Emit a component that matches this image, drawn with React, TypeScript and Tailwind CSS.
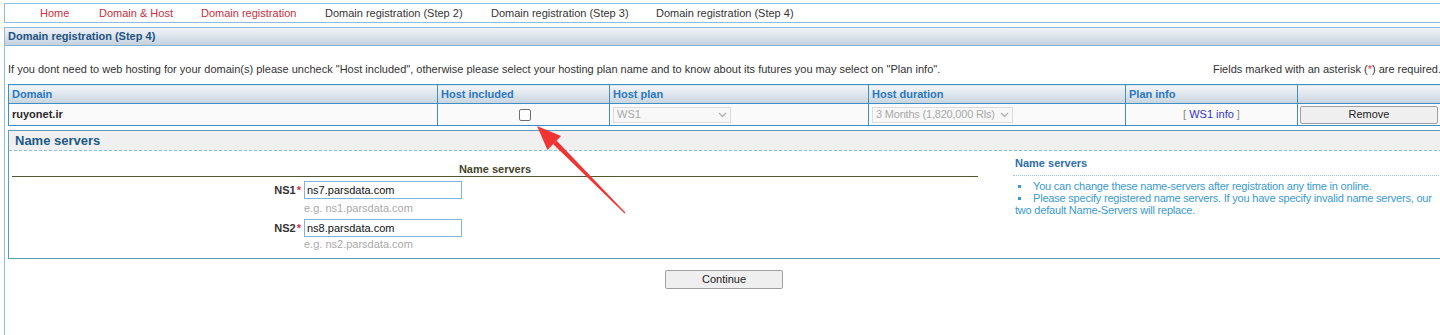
import React from "react";

export default function App() {
  const navItems: { label: string; red: boolean; w: string }[] = [
    { label: "Home", red: true, w: "w-[59px]" },
    { label: "Domain & Host", red: true, w: "w-[102px]" },
    { label: "Domain registration", red: true, w: "w-[124px]" },
    { label: "Domain registration (Step 2)", red: false, w: "w-[166px]" },
    { label: "Domain registration (Step 3)", red: false, w: "w-[165px]" },
    { label: "Domain registration (Step 4)", red: false, w: "w-[170px]" },
  ];
  const th =
    "h-[19px] px-[3px] text-left font-bold text-[#2b78c2] border border-[#3d8fc6] bg-gradient-to-b from-[#f4f7fa] to-[#c8d4df] align-middle";
  return (
    <div className="relative w-[1440px] h-[335px] overflow-hidden bg-white font-['Liberation_Sans',Arial,sans-serif] text-[11px] text-[#333]">
      <div className="w-[1460px] pl-[4px] pt-[3px]">
        {/* top nav */}
        <div className="h-[20px] border-y border-l border-[#8dbdd9] flex items-center pl-[35px]">
          {navItems.map((n) => (
            <span
              key={n.label}
              className={`${n.w} shrink-0 whitespace-nowrap ${n.red ? "text-[#c8303e]" : "text-[#353535]"}`}
            >
              {n.label}
            </span>
          ))}
        </div>

        {/* main panel */}
        <div className="mt-[4px] h-[310px] border-l border-t border-[#8dbdd9]">
          <div className="h-[18px] flex items-center pl-[3px] font-bold text-[#1e5384] bg-gradient-to-b from-[#f2f5f8] to-[#c4d1dd] border-b border-[#7fb3d4]">
            Domain registration (Step 4)
          </div>

          <div className="h-[38px] flex items-end justify-between pl-[3px] pr-[19px] pb-[7px]">
            <span>
              If you dont need to web hosting for your domain(s) please uncheck "Host included", otherwise please select your hosting plan name and to know about its futures you may select on "Plan info".
            </span>
            <span>
              Fields marked with an asterisk (<span className="text-[#e03040]">*</span>) are required.
            </span>
          </div>

          {/* domains table */}
          <table className="ml-[3px] border-collapse w-[1436px] table-fixed">
            <colgroup>
              <col className="w-[429px]" />
              <col className="w-[172px]" />
              <col className="w-[259px]" />
              <col className="w-[257px]" />
              <col className="w-[172px]" />
              <col className="w-[147px]" />
            </colgroup>
            <thead>
              <tr>
                <th className={th}>Domain</th>
                <th className={th}>Host included</th>
                <th className={th}>Host plan</th>
                <th className={th}>Host duration</th>
                <th className={th}>Plan info</th>
                <th className={th}></th>
              </tr>
            </thead>
            <tbody>
              <tr className="h-[22px] bg-[#fafafa]">
                <td className="border border-[#3d8fc6] px-[3px] font-bold text-[#2a2a2a]">ruyonet.ir</td>
                <td className="border border-[#3d8fc6] text-center">
                  <span className="inline-block align-middle w-[12px] h-[12px] border border-[#707070] rounded-[2px] bg-white ml-[2px]" />
                </td>
                <td className="border border-[#3d8fc6] px-[3px]">
                  <div className="w-[118px] h-[16px] border border-[#dcdcdc] bg-[#f8f8f8] text-[#a8a8a8] flex items-center justify-between px-[3px]">
                    <span>WS1</span>
                    <svg width="9" height="6" viewBox="0 0 9 6">
                      <path d="M1 1 L4.5 4.5 L8 1" fill="none" stroke="#b0b0b0" strokeWidth="1.3" />
                    </svg>
                  </div>
                </td>
                <td className="border border-[#3d8fc6] px-[3px]">
                  <div className="w-[141px] h-[16px] border border-[#dcdcdc] bg-[#f8f8f8] text-[#a8a8a8] flex items-center justify-between px-[3px] whitespace-nowrap tracking-[-0.2px]">
                    <span>3 Months (1,820,000 Rls)</span>
                    <svg width="9" height="6" viewBox="0 0 9 6">
                      <path d="M1 1 L4.5 4.5 L8 1" fill="none" stroke="#b0b0b0" strokeWidth="1.3" />
                    </svg>
                  </div>
                </td>
                <td className="border border-[#3d8fc6] text-center">
                  <span className="text-[#888]">[ </span>
                  <span className="text-[#3433c8]">WS1 info</span>
                  <span className="text-[#888]"> ]</span>
                </td>
                <td className="border border-[#3d8fc6] px-[2px]">
                  <div className="w-[138px] h-[18px] border border-[#a0a0a0] rounded-[2px] bg-[#efefef] flex items-center justify-center text-[#222]">
                    Remove
                  </div>
                </td>
              </tr>
            </tbody>
          </table>

          {/* name servers box */}
          <div className="ml-[3px] mt-[4px] w-[1450px] h-[129px] border border-[#5d9db8] flex flex-col">
            <div className="h-[20px] bg-[#f0f0f0] border-b border-dashed border-[#8ec2de] flex items-center pl-[6px] text-[13px] font-bold text-[#1b5a88]">
              Name servers
            </div>
            <div className="flex">
              <div className="w-[966px] ml-[3px] pt-[12px]">
                <div className="h-[14px] border-b border-[#55552f] text-center font-bold text-[#44442a] leading-[12px]">
                  Name servers
                </div>
                <div className="grid grid-cols-[289px_1fr] gap-x-[3px] mt-[4px]">
                  <div className="h-[18px] flex items-center justify-end font-bold text-[#333]">
                    NS1<span className="text-[#e03040] ml-[1px]">*</span>
                  </div>
                  <div className="h-[18px] w-[158px] border border-[#7fb6d8] flex items-center px-[2px] text-[#111]">
                    ns7.parsdata.com
                  </div>
                  <div />
                  <div className="h-[20px] flex items-center text-[#aaa] pb-[2px]">e.g. ns1.parsdata.com</div>
                  <div className="h-[18px] flex items-center justify-end font-bold text-[#333]">
                    NS2<span className="text-[#e03040] ml-[1px]">*</span>
                  </div>
                  <div className="h-[18px] w-[158px] border border-[#7fb6d8] flex items-center px-[2px] text-[#111]">
                    ns8.parsdata.com
                  </div>
                  <div />
                  <div className="h-[14px] flex items-center text-[#aaa]">e.g. ns2.parsdata.com</div>
                </div>
              </div>
              <div className="ml-[35px] w-[426px] pt-[6px]">
                <div className="pl-[2px] leading-[12px] pb-[6px] font-bold text-[#2f6ea6] border-b border-dotted border-[#9cc6dc]">
                  Name servers
                </div>
                <div className="pt-[4px] text-[#3a9ad0] leading-[12px] pl-[2px] tracking-[-0.2px]">
                  <div>
                    <span className="inline-block align-middle w-[3px] h-[3px] bg-[#3a9ad0] ml-[3px] mr-[12px] mb-[2px]" />
                    You can change these name-servers after registration any time in online.
                  </div>
                  <div>
                    <span className="inline-block align-middle w-[3px] h-[3px] bg-[#3a9ad0] ml-[3px] mr-[12px] mb-[2px]" />
                    Please specify registered name servers. If you have specify invalid name servers, our two default Name-Servers will replace.
                  </div>
                </div>
              </div>
            </div>
          </div>

          <div className="flex justify-center mt-[11px] pl-[2px] w-[1436px]">
            <div className="w-[118px] h-[19px] border border-[#a0a0a0] rounded-[2px] bg-[#efefef] flex items-center justify-center text-[#222]">
              Continue
            </div>
          </div>
        </div>
      </div>

      {/* annotation arrow */}
      <svg className="absolute left-0 top-0 pointer-events-none" width="1440" height="335">
        <polygon points="556.5,140.5 553,144 624.6,213.4 625.4,212.6" fill="#f03434" />
        <polygon points="537,126 561,136 547.5,150" fill="#f03434" />
      </svg>
    </div>
  );
}
